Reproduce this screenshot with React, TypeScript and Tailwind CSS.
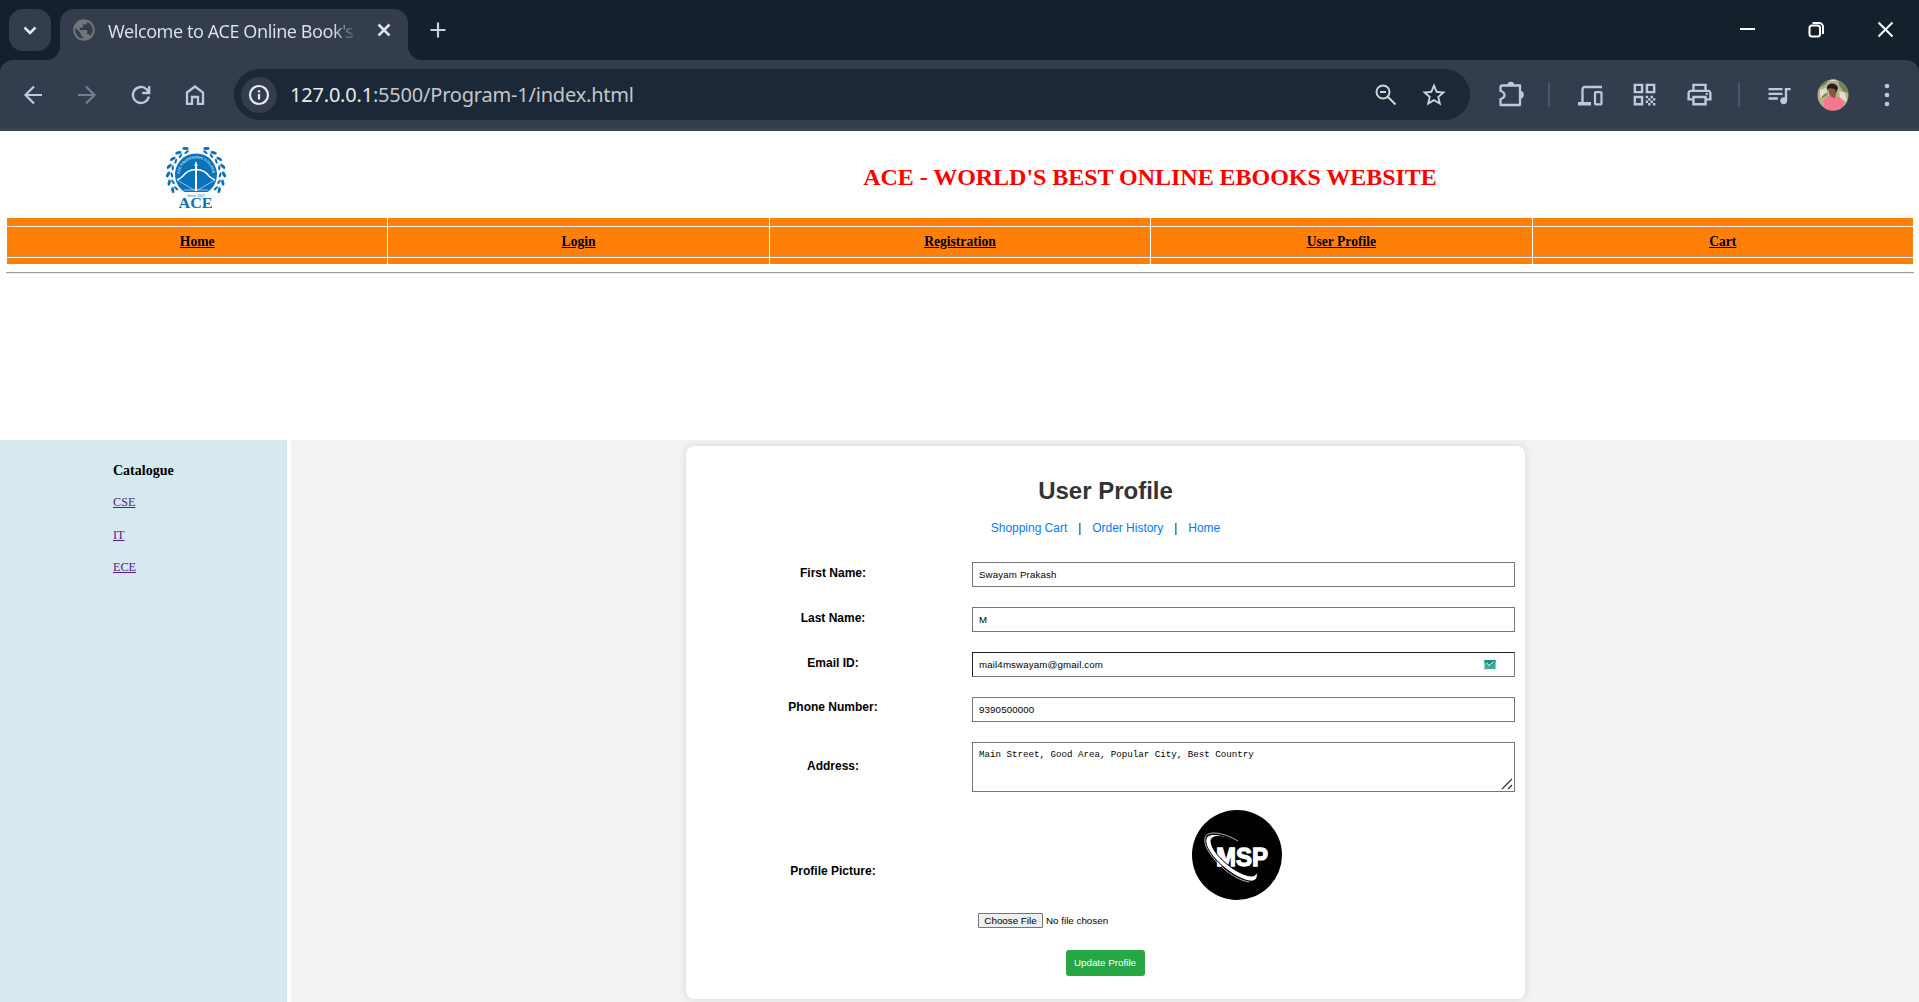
import React from "react";
import {
  MdOutlinePrint,
  MdPublic,
  MdQrCode,
  MdQueueMusic,
  MdStarBorder,
} from "react-icons/md";

function Stroke({ size = 24, width = 2, className = "", children }: { size?: number; width?: number; className?: string; children: React.ReactNode }) {
  return (
    <svg width={size} height={size} viewBox={`0 0 ${size} ${size}`} fill="none" stroke="currentColor" strokeWidth={width} className={className}>
      {children}
    </svg>
  );
}

function TabStrip() {
  return (
    <div className="flex h-[60px] items-start bg-[#15202d] pl-[9px] pt-[9px]">
      <button className="grid h-[42px] w-[42px] place-items-center rounded-[14px] bg-[#333d4d] text-[#e3e8f2]">
        <Stroke size={14} width={2.5}><path d="M1.5 4.5 7 10l5.500-5.500" /></Stroke>
      </button>
      <div className="relative ml-[9px] flex h-[51px] w-[348px] items-center rounded-t-[14px] bg-[#333d4d] pb-[9px] text-[#e1e4ea]">
        <svg width="14" height="14" className="absolute -left-[14px] bottom-0 fill-[#333d4d]"><path d="M14 0v14H0A14 14 0 0 0 14 0" /></svg>
        <svg width="14" height="14" className="absolute -right-[14px] bottom-0 fill-[#333d4d]"><path d="M0 0v14h14A14 14 0 0 1 0 0" /></svg>
        <MdPublic size={26} className="ml-[11px] shrink-0 text-[#70757a]" />
        <span className="ml-[11px] mt-[2px] w-[250px] overflow-hidden whitespace-nowrap bg-gradient-to-r from-[#e1e4ea] from-90% to-[#333d4d] to-100% bg-clip-text font-['Noto_Sans'] text-[18px] leading-[26px] tracking-[-0.42px] text-transparent">
          Welcome to ACE Online Book's
        </span>
        <Stroke size={14} width={2.500} className="absolute left-[317px] top-[14px]"><path d="M1.500 1.500l11 11M12.500 1.500l-11 11" /></Stroke>
      </div>
      <Stroke size={18} width={2.200} className="ml-[21px] mt-[12px] text-[#c5d0e6]"><path d="M9 1.500v15M1.500 9h15" /></Stroke>
      <div className="ml-auto mr-[25px] mt-[12px] flex gap-[52px] text-white">
        <Stroke size={17} width={2}><path d="M1 8h15" /></Stroke>
        <Stroke size={17} width={2}><rect x="1.500" y="4.500" width="10.500" height="11" rx="2.500" /><path d="M4.500 2h6.500a4 4 0 0 1 4 4v7" /></Stroke>
        <Stroke size={17} width={2}><path d="M1.500 1.500l14 14M15.500 1.500l-14 14" /></Stroke>
      </div>
    </div>
  );
}

function Avatar() {
  return (
    <svg width="32" height="32" viewBox="0 0 32 32">
      <defs><clipPath id="avatar"><circle cx="16" cy="16" r="15.500" /></clipPath></defs>
      <g clipPath="url(#avatar)">
        <path fill="#b4b08b" d="M0 0h32v32H0z" />
        <path fill="#6f8250" d="M0 0h12l-3 5-5 3-4 2zM22 1l8 5 2 8-6-2-4-6zM4 14l4-2 2 4-5 3z" />
        <path fill="#e7dccb" d="M3 11l6-2 1 4-7 6zM22 12l6 2 2 9-7-4zM14 0h5v2h-6z" />
        <path fill="#f5788c" d="M7 22q3-5 6-5l6 1q6 0 7 5v9H7z" />
        <path fill="#8d5543" d="M12 8h7v7l-1 4-4-1-2-4z" />
        <path fill="#241b1b" d="M10 9c0-6 10-6 11 0l-2 5-1-4-6-1-1 3z" />
      </g>
    </svg>
  );
}

function Toolbar() {
  return (
    <div className="bg-[#15202d]">
      <div className="flex h-[71px] items-center rounded-t-[13px] border-b border-[#2e394b] bg-[#333d4d] text-[#bcc9e2]">
        <div className="flex h-[70px] w-full items-center border-b border-[#414958]">
          <Stroke size={22} width={2.200} className="ml-[22px]"><path d="M20 11H4M12 2.500 3.500 11l8.500 8.500" /></Stroke>
          <Stroke size={22} width={2.200} className="ml-[32px] text-[#747f91]"><path d="M2 11h16M10 2.500l8.500 8.500-8.500 8.500" /></Stroke>
          <Stroke size={22} width={2.300} className="ml-[32px]"><path d="M18.800 12.500A8 8 0 1 1 16.700 5.400L19 8M19.200 2v7h-7" /></Stroke>
          <Stroke size={22} width={2.300} className="ml-[32px]"><path d="M3 8.500 11 2.500l8 6v11.300h-5V13H8v6.800H3z" /></Stroke>
          <div className="ml-[28px] flex h-[51px] w-[1236px] items-center rounded-full bg-[#1c2737] text-[#d0d3d8]">
            <div className="ml-[7px] grid h-[36px] w-[36px] place-items-center rounded-full bg-[#333d4d] text-[#e6e9ef]">
              <Stroke size={22} width={2.200}><circle cx="11" cy="11" r="9" /><path d="M11 10v5.500M11 6.300v2.200" /></Stroke>
            </div>
            <span className="ml-[13px] whitespace-nowrap font-['Noto_Sans'] text-[20px] leading-[28px] tracking-[-0.2px] text-[#c3c7cd]">
              <span className="text-[#e8eaed]">127.0.0.1</span>:5500/Program-1/index.html
            </span>
            <Stroke size={24} width={2} className="ml-auto mr-[22px]"><circle cx="9" cy="9" r="6.500" /><path d="M13.500 13.500l8 8M6 9h6" /></Stroke>
            <MdStarBorder size={28} className="mr-[22px]" />
          </div>
          <svg width="27" height="27" viewBox="0 0 27 27" className="ml-[28px]">
            <path d="M4.500 4.500h17.500v19.500H2.500v-6q4-1 4-4t-4-4v-3.500q0-2 2-2z" fill="none" stroke="currentColor" strokeWidth="2.300" strokeLinejoin="round" />
            <path d="M9.500 4a3.300 3.300 0 0 1 6.600 0zM22.500 10a3.300 3.700 0 0 1 0 7.400z" fill="currentColor" />
          </svg>
          <div className="ml-[23px] h-[24px] w-[2px] bg-[#4b576b]" />
          <svg width="25" height="22" viewBox="0 0 25 22" className="ml-[28px]">
            <path d="M4.500 18V5.500q0-2.500 2.500-2.500h17" fill="none" stroke="currentColor" strokeWidth="2.300" />
            <path d="M0 18h13v3.500H0z" fill="currentColor" />
            <rect x="17" y="8.200" width="6.500" height="12.200" rx=".8" fill="none" stroke="currentColor" strokeWidth="2.200" />
          </svg>
          <MdQrCode size={29} className="ml-[27px]" />
          <MdOutlinePrint size={29} className="ml-[26px]" />
          <div className="ml-[24px] h-[24px] w-[2px] bg-[#4b576b]" />
          <MdQueueMusic size={28} className="ml-[25px]" />
          <div className="ml-[24px]"><Avatar /></div>
          <svg width="6" height="24" className="ml-[35px] fill-current"><circle cx="3" cy="3" r="2.300" /><circle cx="3" cy="12" r="2.300" /><circle cx="3" cy="21" r="2.300" /></svg>
        </div>
      </div>
    </div>
  );
}

const leafAngles = [-126, -109, -92, -75, -58, -41, -24];

function Leaves() {
  return (
    <>
      {leafAngles.map((a) => (
        <g key={a} transform={`rotate(${a} 30 28.500)`}>
          <ellipse cx="31" cy="0.500" rx="3.200" ry="1.500" transform="rotate(28 31 .5)" />
          <ellipse cx="30.500" cy="4.300" rx="2.700" ry="1.100" transform="rotate(-14 30.500 4.300)" />
        </g>
      ))}
    </>
  );
}

function AceLogo() {
  return (
    <svg width="60" height="64" viewBox="0 0 60 64" fill="#0a71bb" overflow="visible">
      <Leaves />
      <g transform="translate(60 0) scale(-1 1)"><Leaves /></g>
      <path d="M18.500 46A21 21 0 1 1 41.500 46z" />
      <defs><path id="arc" d="M13.500 29a16.500 16.500 0 0 1 33 0" /></defs>
      <text fontSize="3.600" fontFamily="Liberation Sans" fontWeight="bold" fill="#b9daef"><textPath href="#arc" startOffset="1" textLength="49">ACE ENGINEERING COLLEGE</textPath></text>
      <path d="M11 34q4-2 6-4 4-6 13-6.500 9 .5 13 6.500 2 2 6 4" fill="none" stroke="white" strokeWidth="1.500" />
      <path d="M11 34 30 45l19-11M18 44h24" fill="none" stroke="#b9daef" strokeWidth=".8" />
      <path fill="white" d="m30 15 1.800 5h-.8v25h-2V20h-.8z" />
      <text x="30" y="50.500" fontSize="3.500" textAnchor="middle" fontFamily="Liberation Sans">Since 2007</text>
      <text x="29.500" y="62" fontSize="15" textAnchor="middle" fontFamily="Liberation Serif" fontWeight="bold" textLength="34" lengthAdjust="spacingAndGlyphs">ACE</text>
    </svg>
  );
}

const navItems = ["Home", "Login", "Registration", "User Profile", "Cart"];

function SiteHeader() {
  return (
    <header className="h-[309px] bg-white pl-[6px] pr-[5px] font-['Liberation_Serif',serif]">
      <div className="flex h-[87px]">
        <div className="flex w-[380px] justify-center pt-[15px]"><AceLogo /></div>
        <h1 className="flex-1 pt-[30px] text-center text-[24px] font-bold leading-[32px] tracking-[-0.03px] text-[#ff0000]">ACE - WORLD'S BEST ONLINE EBOOKS WEBSITE</h1>
      </div>
      <nav className="mx-px grid grid-cols-5 gap-px">
        {navItems.map((item) => (
          <div key={item} className="bg-[#ff8008] py-[7px]">
            <div className="border-y border-[#9a9a9a]">
              <div className="flex h-[30px] items-center justify-center border-t border-[#eeeeee] text-[13.600px] font-bold leading-[16px] text-black">
                <a className="underline">{item}</a>
              </div>
            </div>
            <div className="-mb-px h-px bg-[#eeeeee]" />
          </div>
        ))}
      </nav>
      <hr className="mt-[8px] h-[2px] border-b border-t border-b-[#eeeeee] border-t-[#9a9a9a]" />
    </header>
  );
}

function Sidebar() {
  return (
    <aside className="w-[287px] bg-[#d6e9ee] pl-[113px] pt-[23px] font-['Liberation_Serif',serif] text-[12.200px]">
      <h2 className="text-[14px] font-bold leading-[16px] text-black">Catalogue</h2>
      <ul className="mt-[7px] text-[#551a8b]">
        {["CSE", "IT", "ECE"].map((name) => (
          <li key={name} className="h-[32.500px] leading-[32px]"><a className="underline">{name}</a></li>
        ))}
      </ul>
    </aside>
  );
}

function MailBadge() {
  return (
    <svg width="14" height="14" viewBox="0 0 14 14" className="mr-[17px]">
      <path fill="#f8f8f8" d="M0 0h14v14H0z" />
      <path fill="#2cb5a0" d="M1.500 2h11v9h-11z" />
      <path fill="#188c7d" d="M1.500 2h11v2.500L7 8 1.500 4.500z" />
      <path fill="none" stroke="white" d="M3.500 4.500 6 7.500l5-4" />
      <path fill="#7998a0" d="M1.500 10h5v1.200h-5z" />
    </svg>
  );
}

function Label({ children }: { children: React.ReactNode }) {
  return <label className="block text-center text-[12px] font-bold leading-[14px] text-black">{children}</label>;
}

const fields = [
  { label: "First Name:", value: "Swayam Prakash", shift: "pb-[4px]" },
  { label: "Last Name:", value: "M", shift: "pb-[4px]" },
  { label: "Email ID:", value: "mail4mswayam@gmail.com", shift: "pb-[4px]", mail: true },
  { label: "Phone Number:", value: "9390500000", shift: "pb-[6px]" },
];

function MspPicture() {
  return (
    <svg width="90" height="90" viewBox="0 0 90 90">
      <circle cx="45" cy="45" r="45" />
      <text x="24" y="55.500" fontFamily="Liberation Sans" fontWeight="bold" fontSize="26" fill="white" stroke="white" strokeWidth="1.300" textLength="52" lengthAdjust="spacingAndGlyphs">MSP</text>
      <path d="M48 34C33 24 16 21 14 29c-3 12 24 38 43 42 8 1 9-4 8-9-1 4-5 5-11 3C38 60 19 42 19 31c0-7 14-6 29 3z" fill="white" stroke="black" strokeWidth="1" />
      <path d="M46 31C31 22 15 20 13 28c-3 13 24 41 44 44" fill="none" stroke="white" strokeWidth=".7" />
    </svg>
  );
}

function ProfileCard() {
  return (
    <section className="ml-[395px] mt-[6px] h-[553px] w-[839px] rounded-[8px] bg-white pt-[31px] shadow-[0_0_10px_rgba(0,0,0,0.13)]">
      <h2 className="text-center text-[24px] font-bold leading-[28px] text-[#333333]">User Profile</h2>
      <div className="mt-[16px] flex justify-center text-[12px] leading-[14px] tracking-[-0.02px] text-[#007bff]">
        <a>Shopping Cart</a><span className="w-[25px] text-center text-[#2b1600]">|</span>
        <a>Order History</a><span className="w-[25px] text-center text-[#2b1600]">|</span>
        <a>Home</a>
      </div>
      <div className="mt-[17px]">
        {fields.map((f) => (
          <div key={f.label} className="grid h-[45px] grid-cols-[286px_543px] items-center">
            <div className={`pl-[8px] text-center ${f.shift}`}><Label>{f.label}</Label></div>
            <div className={f.mail ? "flex h-[25px] items-center border border-[#767676] border-l-[#202020] border-t-[#202020] pl-[6px]" : "flex h-[25px] items-center border border-[#767676] pl-[6px]"}>
              <span className="flex-1 text-[9.700px] leading-[12px] tracking-[0.150px] text-black">{f.value}</span>
              {f.mail && <MailBadge />}
            </div>
          </div>
        ))}
        <div className="grid h-[69px] grid-cols-[286px_543px] items-center">
          <div className="pb-[2px] pl-[8px] text-center"><Label>Address:</Label></div>
          <div className="relative h-[50px] border border-[#767676] pl-[6px] pt-[6px] font-['Liberation_Mono',monospace] text-[9.170px] leading-[12px] text-black">
            Main Street, Good Area, Popular City, Best Country
            <Stroke size={12} width={1.200} className="absolute bottom-px right-px text-[#333333]"><path d="M1 11 11 1M7 11l4-4" /></Stroke>
          </div>
        </div>
        <div className="grid h-[140px] grid-cols-[286px_543px] items-center">
          <div className="pl-[8px] text-center"><Label>Profile Picture:</Label></div>
          <div className="flex h-full flex-col pl-[6px] pt-[9px]">
            <div className="flex justify-center pr-[19px]"><MspPicture /></div>
            <div className="mt-[13px] flex items-center text-[9.800px] leading-[12px] text-black">
              <button className="h-[15px] w-[65px] rounded-[1px] border border-[#767676] bg-[#efefef] leading-[13px]">Choose File</button>
              <span className="ml-[3px]">No file chosen</span>
            </div>
          </div>
        </div>
      </div>
      <div className="flex justify-center pr-[1px] pt-[9px]">
        <button className="h-[26px] w-[79px] rounded-[3px] bg-[#28a745] text-[9.800px] leading-[12px] text-white">Update Profile</button>
      </div>
    </section>
  );
}

export default function App() {
  return (
    <div className="flex h-[1002px] w-[1919px] flex-col overflow-hidden bg-white">
      <TabStrip />
      <Toolbar />
      <SiteHeader />
      <div className="flex flex-1">
        <Sidebar />
        <main className="ml-[4px] flex-1 overflow-hidden bg-[#f3f3f3] font-['Liberation_Sans',sans-serif]"><ProfileCard /></main>
      </div>
    </div>
  );
}
